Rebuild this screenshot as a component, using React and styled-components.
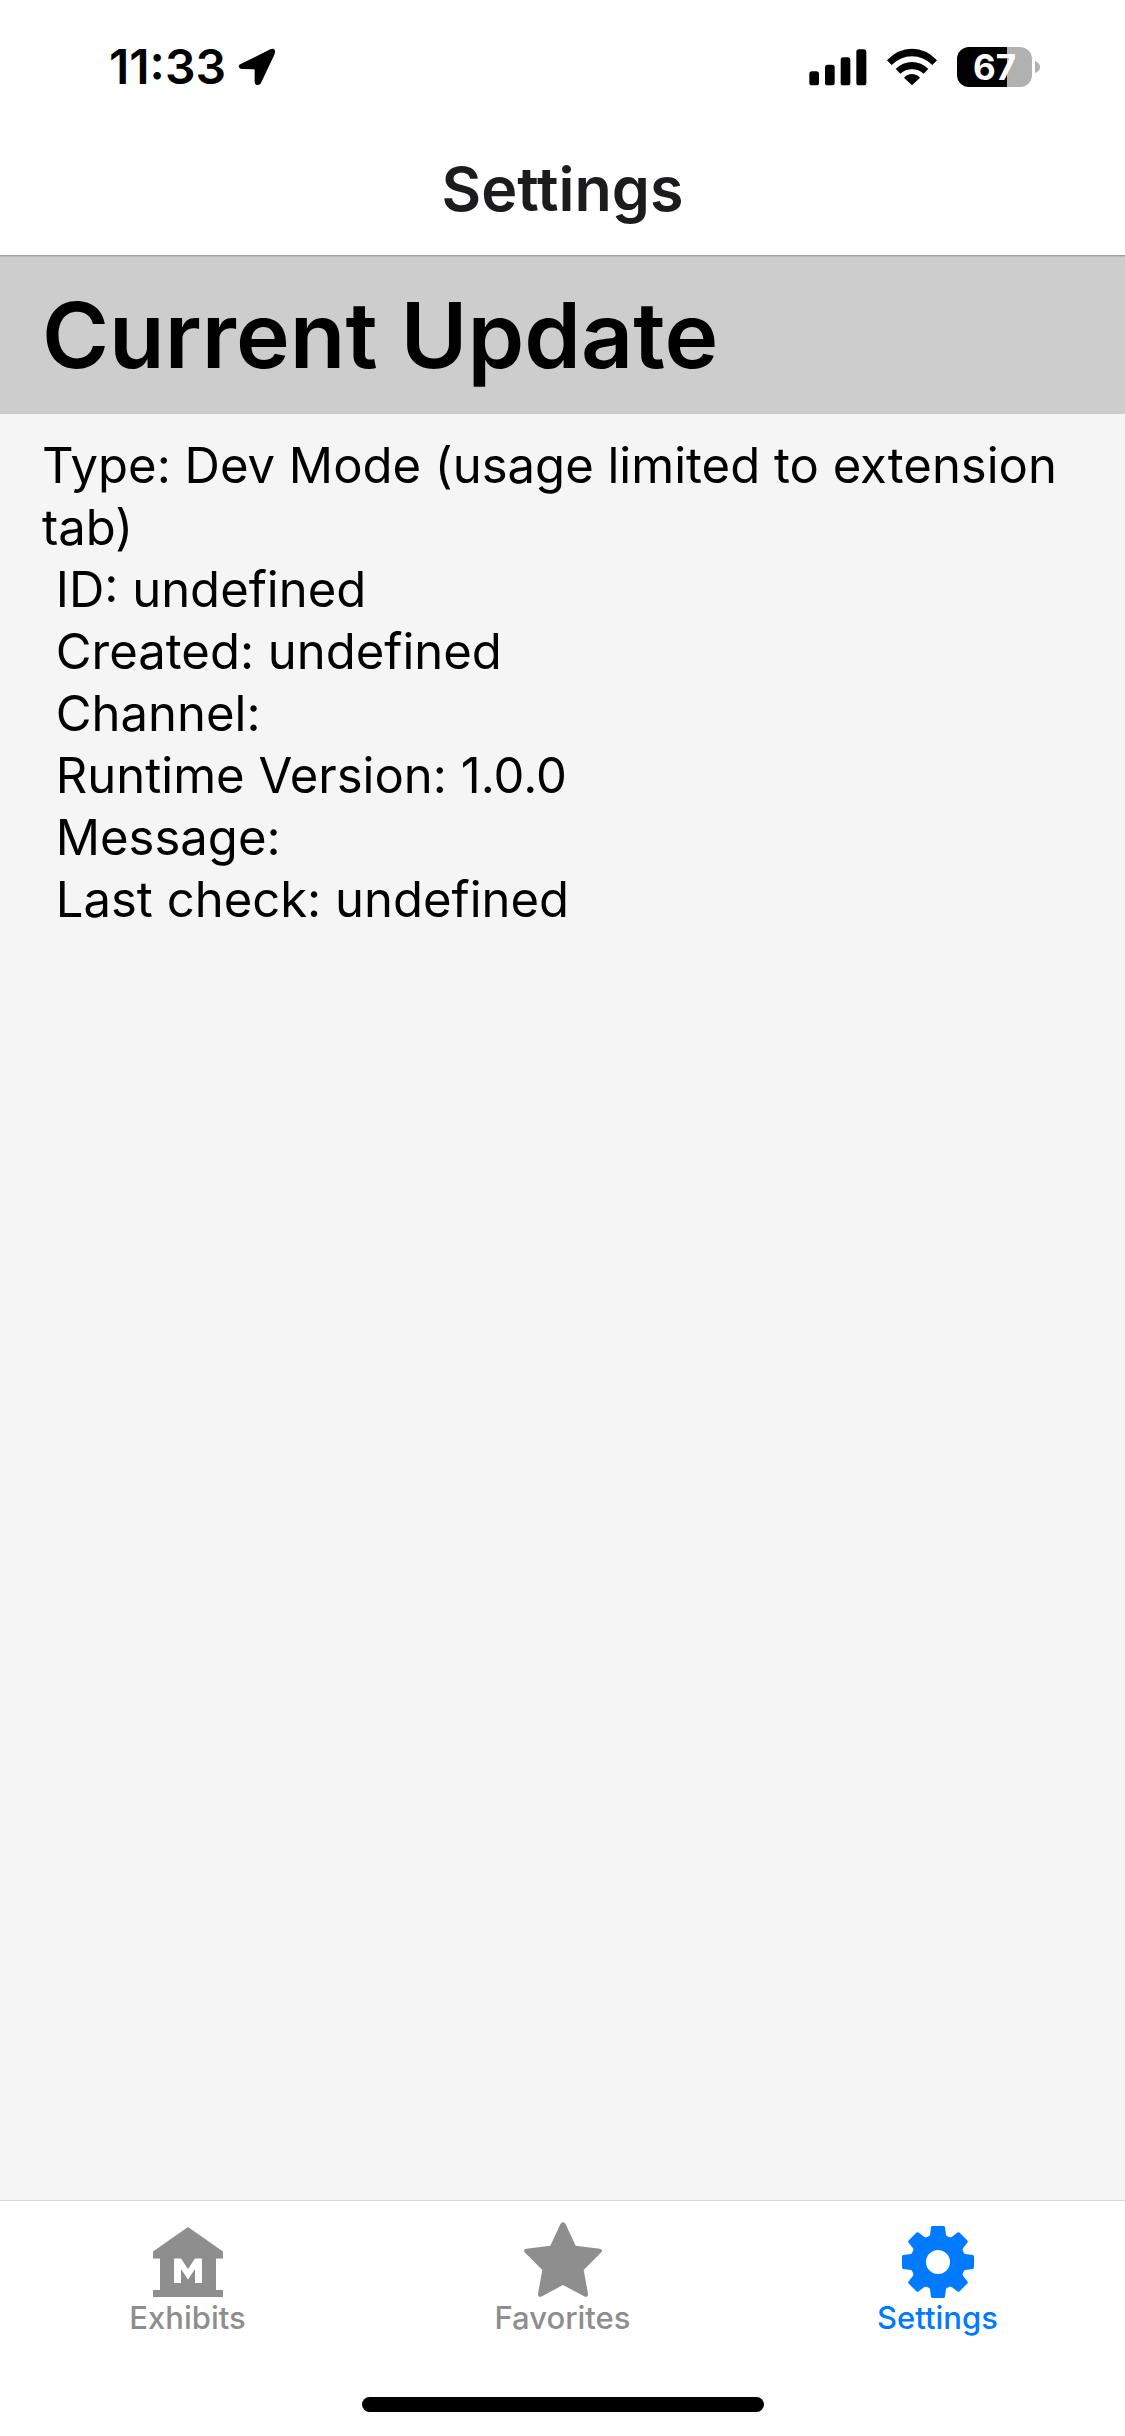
import React, { useState } from "react";
import styled, { createGlobalStyle } from "styled-components";
import { MdMuseum } from "react-icons/md";

const GlobalStyle = createGlobalStyle`
  *, *::before, *::after { box-sizing: border-box; }
  body { margin: 0; background: #f5f5f5; }
`;

const Screen = styled.div`
  display: flex;
  flex-direction: column;
  min-height: 100vh;
  color: #000;
  background: #f5f5f5;
  font-family: Inter, "Liberation Sans", sans-serif;
`;

const StatusBar = styled.div`
  display: flex;
  align-items: center;
  justify-content: space-between;
  height: 132px;
  padding: 2px 85px 0 109px;
  background: #fff;
`;

const StatusGroup = styled.div`
  display: flex;
  align-items: center;
  gap: ${({ $gap }) => $gap}px;
`;

const Time = styled.time`
  font-size: 48px;
  font-weight: 600;
  line-height: 56px;
`;

const Battery = styled.div`
  display: flex;
  align-items: center;
  gap: 3px;
`;

const BatteryBody = styled.div`
  width: 75px;
  height: 40px;
  border-radius: 12px;
  color: #fff;
  background: linear-gradient(to right, #000 ${({ $level }) => $level}%, #b1b1b1 ${({ $level }) => $level}%);
  font-size: 35px;
  font-weight: 700;
  line-height: 40px;
  text-align: center;
`;

const Header = styled.header`
  position: relative;
  display: flex;
  align-items: center;
  justify-content: center;
  height: 124px;
  padding-bottom: 10px;
  border-bottom: 1px solid #a0a0a0;
  background: #fff;
  box-shadow: 0 1px 0 #b8b8b8;
`;

const HeaderTitle = styled.h1`
  margin: 0;
  color: #1c1c1e;
  font-size: 61px;
  font-weight: 600;
  line-height: 72px;
`;

const Content = styled.main`
  flex: 1;
`;

const SectionTitle = styled.h2`
  margin: 0;
  padding: 21px 42px;
  background: #cdcdcd;
  font-size: 91px;
  font-weight: 600;
  line-height: 116px;
`;

const Details = styled.p`
  margin: 0;
  padding: 21px 42px;
  font-size: 49px;
  line-height: 62px;
  white-space: pre-wrap;
`;

const TabBar = styled.nav`
  display: flex;
  height: 169px;
  border-top: 1px solid #d8d8d8;
  background: #fff;
`;

const Tab = styled.button`
  display: flex;
  flex: 1;
  flex-direction: column;
  align-items: center;
  padding: 19px 0 0;
  border: 0;
  color: ${({ $active }) => ($active ? "#007aff" : "#8e8e8f")};
  background: none;
  font-family: inherit;
  font-size: 31px;
  font-weight: 500;
  line-height: 28px;
  cursor: pointer;
`;

const HomeArea = styled.div`
  display: flex;
  justify-content: center;
  padding: 28px 0 24px;
  background: #fff;
`;

const HomeIndicator = styled.div`
  width: 402px;
  height: 15px;
  border-radius: 8px;
  background: #000;
`;

const LocationIcon = () => (
  <svg width="38" height="38" viewBox="0 0 114 114" aria-hidden="true">
    <path d="M8 48 97 4Q106 0 110 6Q113 10 109 20L69 105Q65 112 58 111Q50 110 50 101L50 67Q50 64 47 64L11 63Q3 62 2 56Q1 51 8 48Z" />
  </svg>
);

const SignalIcon = () => (
  <svg width="58" height="38" viewBox="0 0 174 114" aria-hidden="true">
    <rect x="1" y="70" width="29" height="42" rx="8" />
    <rect x="48" y="50" width="29" height="62" rx="8" />
    <rect x="95" y="28" width="29" height="84" rx="8" />
    <rect x="142" y="4" width="30" height="108" rx="8" />
  </svg>
);

const WifiIcon = () => (
  <svg width="52" height="38" viewBox="0 0 156 114" aria-hidden="true">
    <path d="M3 37Q35 2 78 2T153 37L139 51Q112 25 78 25T17 51Z" />
    <path d="M29 63Q50 42 78 42T127 63L113 77Q98 64 78 64T43 77Z" />
    <path d="M54 89Q65 78 78 78T102 89L78 112Z" />
  </svg>
);

const BatteryTip = () => (
  <svg width="5" height="12" viewBox="0 0 5 12" aria-hidden="true">
    <path d="M0 0Q5 2 5 6T0 12Z" fill="#b1b1b1" />
  </svg>
);

const ExhibitsIcon = () => <MdMuseum size={84} aria-hidden="true" />;

const StarIcon = () => (
  <svg width="84" height="84" viewBox="150 87 252 252" fill="currentColor" aria-hidden="true">
    <path d="M276 94Q281 94 284 100L314 164 386 173Q397 176 391 184L338 237 351 308Q351 320 342 317L276 282 210 317Q201 320 201 308L214 237 161 184Q155 176 166 173L238 164 268 100Q271 94 276 94Z" />
  </svg>
);

const GearIcon = () => (
  <svg width="84" height="84" viewBox="-126 -126 252 252" fill="currentColor" aria-hidden="true">
    <path
      fillRule="evenodd"
      d="M0-82A82 82 0 0 1 0 82A82 82 0 0 1 0-82ZM0-36A36 36 0 0 0 0 36A36 36 0 0 0 0-36Z"
    />
    {[0, 45, 90, 135, 180, 225, 270, 315].map((angle) => (
      <path
        key={angle}
        transform={`rotate(${angle})`}
        d="M-17-108H17Q20-108 21-104L24-82Q25-77 30-75L0-60-30-75Q-25-77-24-82L-21-104Q-20-108-17-108Z"
      />
    ))}
  </svg>
);

const tabs = [
  { name: "Exhibits", Icon: ExhibitsIcon },
  { name: "Favorites", Icon: StarIcon },
  { name: "Settings", Icon: GearIcon },
];

const updateInfo = [
  "Type: Dev Mode (usage limited to extension tab)",
  "ID: undefined",
  "Created: undefined",
  "Channel:",
  "Runtime Version: 1.0.0",
  "Message:",
  "Last check: undefined",
].join("\n ");

export default function App() {
  const [current, setCurrent] = useState("Settings");

  return (
    <Screen>
      <GlobalStyle />
      <StatusBar>
        <StatusGroup $gap={12}>
          <Time>11:33</Time>
          <LocationIcon />
        </StatusGroup>
        <StatusGroup $gap={19}>
          <SignalIcon />
          <WifiIcon />
          <Battery>
            <BatteryBody $level={67}>67</BatteryBody>
            <BatteryTip />
          </Battery>
        </StatusGroup>
      </StatusBar>
      <Header>
        <HeaderTitle>Settings</HeaderTitle>
      </Header>
      <Content>
        <SectionTitle>Current Update</SectionTitle>
        <Details>{updateInfo}</Details>
      </Content>
      <TabBar>
        {tabs.map(({ name, Icon }) => (
          <Tab
            key={name}
            type="button"
            $active={name === current}
            aria-current={name === current ? "page" : undefined}
            onClick={() => setCurrent(name)}
          >
            <Icon />
            {name}
          </Tab>
        ))}
      </TabBar>
      <HomeArea>
        <HomeIndicator />
      </HomeArea>
    </Screen>
  );
}
